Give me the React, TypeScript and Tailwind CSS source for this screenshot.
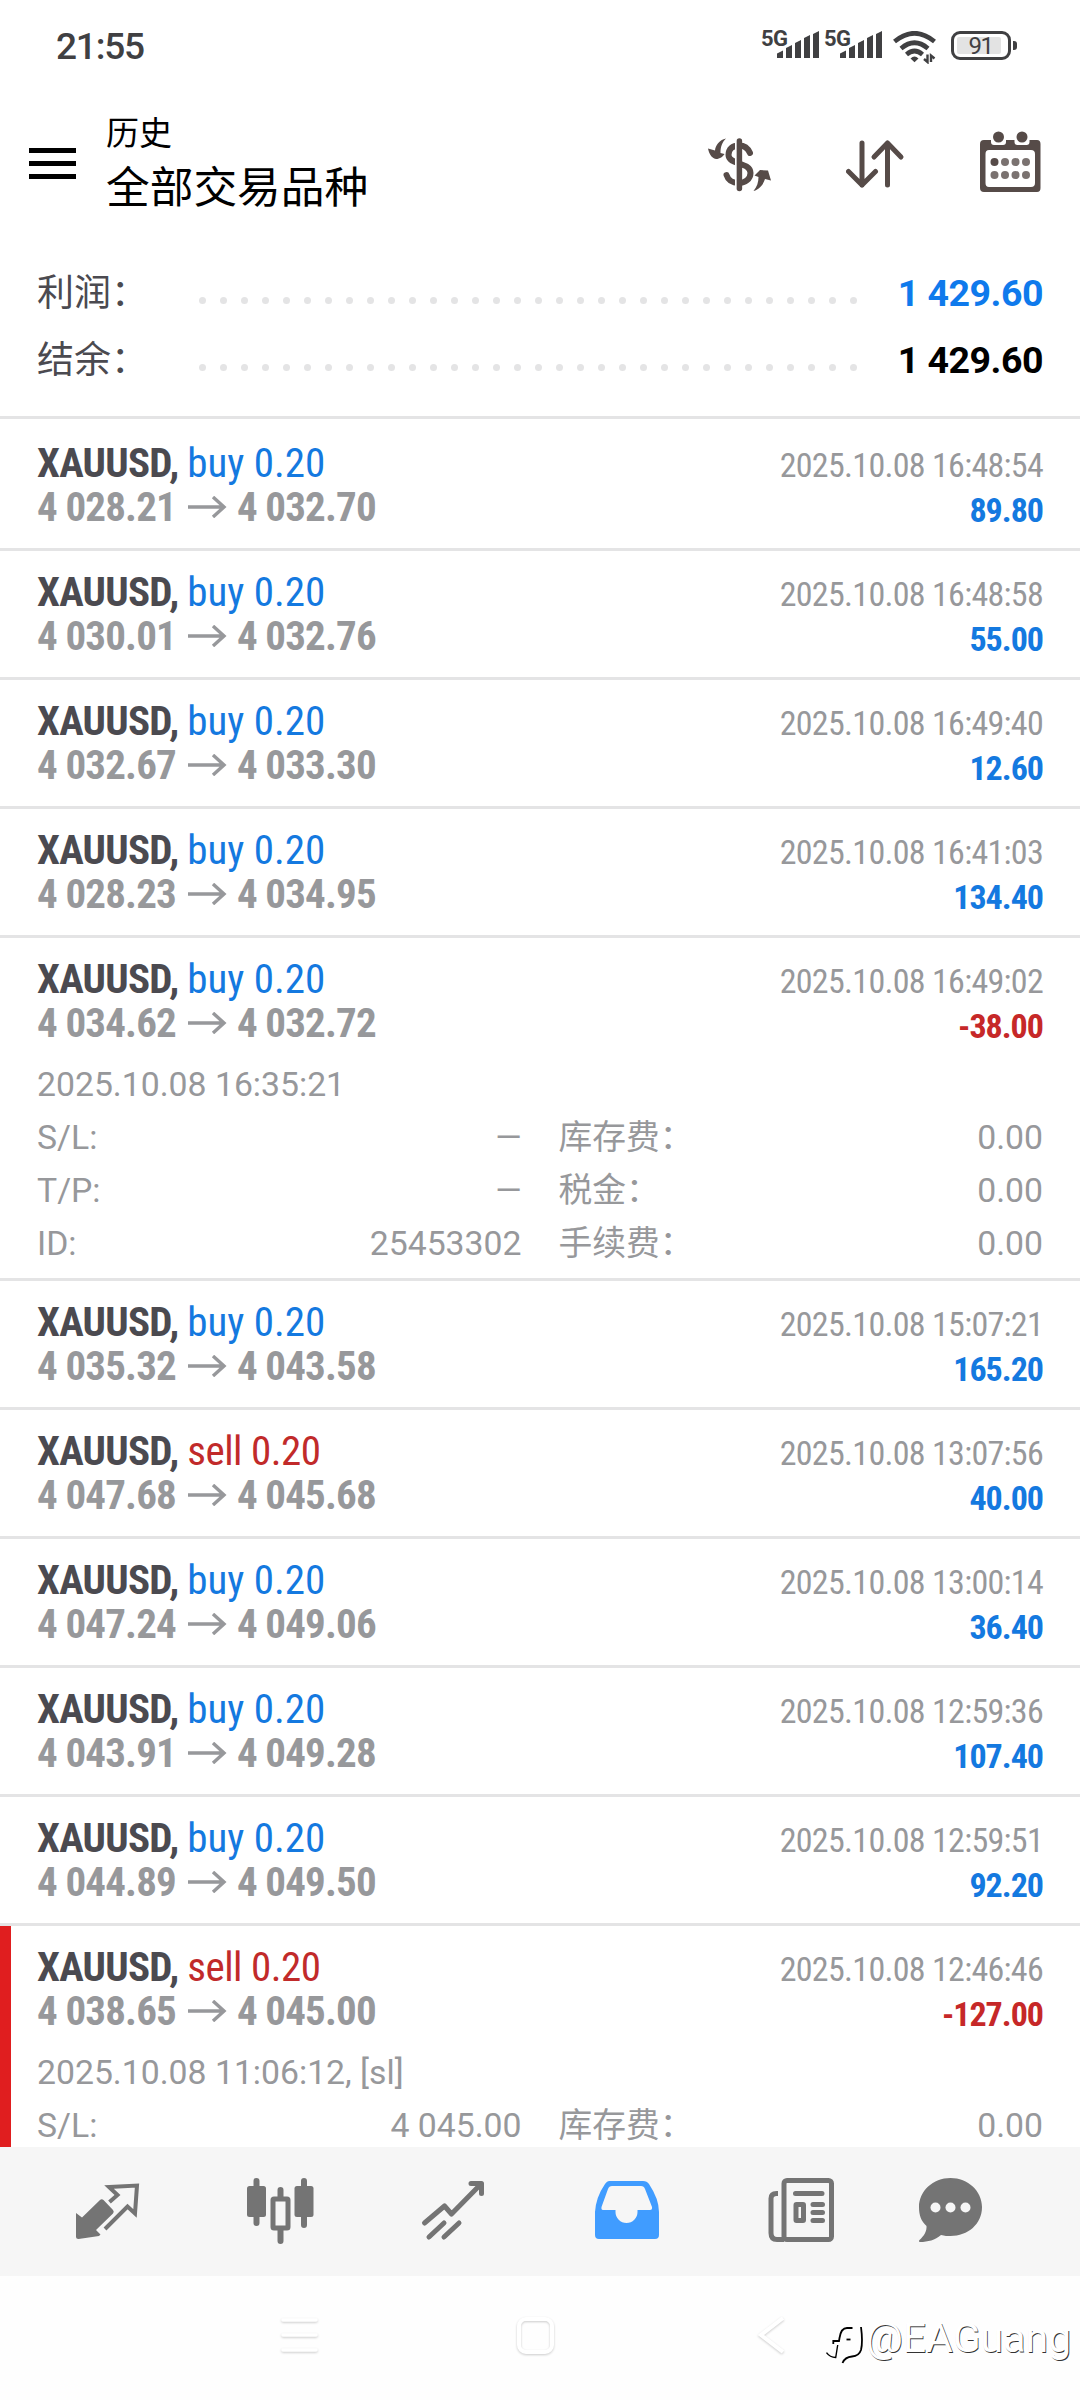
import React from 'react';

interface Details {
  opened: string;
  rows: [string, string, string, string][];
}

interface Deal {
  side: 'buy' | 'sell';
  from: string;
  to: string;
  closed: string;
  profit: string;
  details?: Details;
  marked?: boolean;
}

const deals: Deal[] = [
  { side: 'buy', from: '4 028.21', to: '4 032.70', closed: '2025.10.08 16:48:54', profit: '89.80' },
  { side: 'buy', from: '4 030.01', to: '4 032.76', closed: '2025.10.08 16:48:58', profit: '55.00' },
  { side: 'buy', from: '4 032.67', to: '4 033.30', closed: '2025.10.08 16:49:40', profit: '12.60' },
  { side: 'buy', from: '4 028.23', to: '4 034.95', closed: '2025.10.08 16:41:03', profit: '134.40' },
  {
    side: 'buy', from: '4 034.62', to: '4 032.72', closed: '2025.10.08 16:49:02', profit: '-38.00',
    details: {
      opened: '2025.10.08 16:35:21',
      rows: [
        ['S/L:', '—', '库存费：', '0.00'],
        ['T/P:', '—', '税金：', '0.00'],
        ['ID:', '25453302', '手续费：', '0.00']
      ]
    }
  },
  { side: 'buy', from: '4 035.32', to: '4 043.58', closed: '2025.10.08 15:07:21', profit: '165.20' },
  { side: 'sell', from: '4 047.68', to: '4 045.68', closed: '2025.10.08 13:07:56', profit: '40.00' },
  { side: 'buy', from: '4 047.24', to: '4 049.06', closed: '2025.10.08 13:00:14', profit: '36.40' },
  { side: 'buy', from: '4 043.91', to: '4 049.28', closed: '2025.10.08 12:59:36', profit: '107.40' },
  { side: 'buy', from: '4 044.89', to: '4 049.50', closed: '2025.10.08 12:59:51', profit: '92.20' },
  {
    side: 'sell', from: '4 038.65', to: '4 045.00', closed: '2025.10.08 12:46:46', profit: '-127.00', marked: true,
    details: {
      opened: '2025.10.08 11:06:12, [sl]',
      rows: [['S/L:', '4 045.00', '库存费：', '0.00']]
    }
  }
];

const Signal = () => (
  <div className="flex w-[63px]">
    <span className="-mt-[3px] -ml-[1px] w-[16px] text-[22px] leading-[22px] font-bold tracking-[-0.5px] whitespace-nowrap">5G</span>
    <svg width="43" height="28" viewBox="0 0 43 28" fill="currentColor">
      <path d="M0 27V22.500L6 19.500V27ZM9 27V17L15 14V27ZM18 27V12L24 9V27ZM27 27V7L33 4V27ZM36 27V3L42 0V27Z" />
    </svg>
  </div>
);

const StatusBar = () => (
  <div className="flex h-[92px] items-start justify-between pt-[28px] pr-[63px] pl-[56px] text-[#404042]">
    <span className="text-[37px] leading-[37px] font-medium tracking-[-1.200px]">21:55</span>
    <div className="flex items-start pt-[3px]">
      <Signal />
      <Signal />
      <svg className="ml-[5px]" width="44" height="33" viewBox="0 0 44 33" fill="none" stroke="currentColor" strokeWidth="4.600">
        <path d="M1.500 10.500Q21.500-6 41.500 10.500" />
        <path d="M8 17.500Q21.500 6 35 17.500" />
        <path d="M13.500 23.500Q21.500 16.500 29.500 23.500" />
        <path d="M17.500 27.500Q21.500 23.500 25.500 27.500L21.500 31.200Z" fill="currentColor" stroke="none" />
        <path d="M34.500 23.500V31L31 28M38 31V24.500L41.500 27.500" strokeWidth="2.400" />
      </svg>
      <div className="ml-[14px] flex items-center">
        <div className="flex h-[29px] w-[60px] rounded-[9px] border-[3px] border-[#404042] p-[3px]">
          <div className="flex h-full w-[44px] items-center justify-center rounded-[2px] bg-[#e3e3e3] pl-[3px] text-[24px] leading-none tracking-[-1.500px]">91</div>
        </div>
        <div className="ml-[2px] h-[9px] w-[4px] rounded-r-[3px] bg-[#404042]" />
      </div>
    </div>
  </div>
);

const Header = () => (
  <header className="flex h-[146px] items-start pr-[39px] pl-[29px]">
    <div className="mt-[56px] flex w-[47px] flex-col gap-[8px]">
      <div className="h-[5px] bg-black" />
      <div className="h-[5px] bg-black" />
      <div className="h-[5px] bg-black" />
    </div>
    <div className="mt-[19px] ml-[30px] flex-1 text-black">
      <div className="text-[33px] leading-[46px]">历史</div>
      <div className="mt-[2px] text-[43.700px] leading-[58px]">全部交易品种</div>
    </div>
    <div className="mt-[38px] flex items-center text-[#564b48]">
      <svg width="66" height="62" viewBox="0 0 66 62" fill="currentColor">
        <path d="M43 22C40.500 16 37 14.500 32 14.500C25.500 14.500 21.500 18 21.500 24C21.500 34 43.500 31 43.500 42C43.500 48 38 52 32 52C25 52 21 49 19.500 44" fill="none" stroke="currentColor" strokeWidth="6" strokeLinecap="round" />
        <path d="M28 8H31V60H28Z" fill="#fff" />
        <path d="M32.400 10V57.500" stroke="currentColor" strokeWidth="5.500" strokeLinecap="round" />
        <path d="M19 7.500C12 9 8.500 14.500 8 19.500L1 17.500C2 22 4 27 9 28C13 28 16 25.500 17.500 23L13.500 22C13.500 16 15 11.500 19 7.500Z" />
        <path d="M46.500 60C53 58 56.500 53 58 48L64 49.500L61 39.500L53 39L47.500 44.500L51.500 46C51.500 51 50 56 46.500 60Z" />
      </svg>
      <svg className="ml-[73px]" width="60" height="62" viewBox="0 0 60 62" fill="none" stroke="currentColor" strokeWidth="5" strokeLinecap="round" strokeLinejoin="round">
        <path d="M15 12V54M1.500 40.500L15 54L28.500 40.500" transform="translate(1 0)" />
        <path d="M41.500 54V12M28 26L41.500 12L55 26" />
      </svg>
      <svg className="ml-[74px]" width="61" height="64" viewBox="0 0 61 64" fill="currentColor">
        <path fillRule="evenodd" d="M4 10H57Q60.500 10 60.500 14V58Q60.500 62 57 62H4Q0 62 0 58V14Q0 10 4 10ZM9 20Q5.500 20 5.500 24V53Q5.500 57 9 57H51Q55 57 55 53V24Q55 20 51 20Z" />
        <path d="M11 8H26V12Q26 15 23 15H14Q11 15 11 12ZM34.500 8H49.500V12Q49.500 15 46.500 15H37.500Q34.500 15 34.500 12Z" fill="#fff" />
        <circle cx="18.500" cy="7" r="5.500" />
        <circle cx="42" cy="7" r="5.500" />
        <circle cx="14.500" cy="32" r="4" />
        <g opacity="0.78">
          <circle cx="25" cy="32" r="4" />
          <circle cx="35.500" cy="32" r="4" />
          <circle cx="46" cy="32" r="4" />
          <circle cx="14.500" cy="45" r="4" />
          <circle cx="25" cy="45" r="4" />
          <circle cx="35.500" cy="45" r="4" />
          <circle cx="46" cy="45" r="4" />
        </g>
      </svg>
    </div>
  </header>
);

const SummaryRow = ({ label, value, className }: { label: string; value: string; className: string }) => (
  <div className="flex h-[67px] items-center">
    <span className="w-[162px] pt-[3px] text-[37px] text-[#4b4a50]">{label}</span>
    <div className="mt-[15px] flex w-[658px] justify-between">
      {Array.from({ length: 32 }, (_, i) => (
        <i key={i} className="h-[7px] w-[7px] rounded-full bg-[#e4e4e5]" />
      ))}
    </div>
    <span className={`flex-1 pt-[1px] text-right text-[37.500px] font-bold tracking-[-0.500px] whitespace-nowrap ${className}`}>{value}</span>
  </div>
);

const DetailCell = ({ label, value }: { label: string; value: string }) => (
  <div className="flex justify-between">
    <span>{label}</span>
    <span>{value}</span>
  </div>
);

const DealRow = ({ deal, first }: { deal: Deal; first: boolean }) => (
  <div className={`relative border-b-[3px] border-[#e4e4e5] px-[37px] ${first ? 'pt-[3px]' : ''}`}>
    {deal.marked && <div className="absolute inset-y-0 left-0 w-[11px] bg-[#e01e1f]" />}
    <div className="flex h-[126px] justify-between pt-[19px] font-['Roboto_Condensed','Roboto'] [font-stretch:75%]">
      <div className="text-[41px] leading-[45px]">
        <div>
          <span className="font-bold tracking-[-0.750px] text-[#4b4a50]">XAUUSD, </span>
          <span className={deal.side === 'buy' ? 'text-[#1479e0]' : 'tracking-[-0.500px] text-[#c12a2a]'}>{deal.side} 0.20</span>
        </div>
        <div className="-mt-[1px] flex items-center font-bold tracking-[-0.850px] text-[#97989b]">
          <span>{deal.from}</span>
          <svg className="mr-[10px] mb-[2px] ml-[12px]" width="39" height="22" viewBox="0 0 39 22" fill="none" stroke="currentColor" strokeWidth="3.400">
            <path d="M0 11H36M25 1L36 11L25 21" />
          </svg>
          <span>{deal.to}</span>
        </div>
      </div>
      <div className="pt-[2px] text-right text-[34px] leading-[45px] tracking-[-0.700px]">
        <div className="text-[#97989b]">{deal.closed}</div>
        <div className={`font-bold tracking-[-1px] ${deal.profit.startsWith('-') ? 'text-[#c62828]' : 'text-[#1479e0]'}`}>{deal.profit}</div>
      </div>
    </div>
    {deal.details && (
      <div className="-mt-[6px] h-[220px] text-[33.750px] leading-[53px] text-[#97989b]">
        <div>{deal.details.opened}</div>
        {deal.details.rows.map(([label, value, feeLabel, fee]) => (
          <div key={label} className="grid h-[53px] grid-cols-2 gap-x-[37px]">
            <DetailCell label={label} value={value} />
            <DetailCell label={feeLabel} value={fee} />
          </div>
        ))}
      </div>
    )}
  </div>
);

const TabBar = () => (
  <nav className="flex h-[129px] items-start bg-[#f6f6f6] pt-[29px] text-[#747474]">
    <svg className="ml-[74px]" width="68" height="68" viewBox="0 0 68 68" fill="currentColor">
      <path d="M2 37L8 41.500L26 24Q27.700 22.500 29.500 24L39 34Q40.500 35.700 39 37.500L22 54L26.500 58.500L25 60L4.500 63Q2 63 2 60.500Z" />
      <path d="M35.500 26L43.500 19L35 11L63 9.500L61 37.500L53.500 30.500L31 53" fill="none" stroke="currentColor" strokeWidth="4" />
    </svg>
    <svg className="ml-[103px]" width="70" height="68" viewBox="0 0 70 68" fill="currentColor">
      <path d="M11.500 5V47M59 5V49M35.500 14V24M35.500 54V65" stroke="currentColor" strokeWidth="6" strokeLinecap="round" />
      <rect x="2" y="10" width="19" height="31" rx="2.500" />
      <rect x="49.500" y="10" width="19" height="31" rx="2.500" />
      <rect x="28" y="23" width="15" height="29" rx="1" fill="#f6f6f6" stroke="currentColor" strokeWidth="5" />
    </svg>
    <svg className="ml-[105px]" width="68" height="68" viewBox="0 0 68 68" fill="none" stroke="currentColor" strokeWidth="5" strokeLinecap="round" strokeLinejoin="round">
      <path d="M4.500 47L24.500 30L31.500 38L60 9" />
      <path d="M51 7.500H61.500V17.500" />
      <path d="M9 61L24 47M24 61L39 47" />
    </svg>
    <svg className="ml-[105px] text-[#409cff]" width="68" height="68" viewBox="0 0 68 68" fill="currentColor">
      <path fillRule="evenodd" d="M16 5H50Q54 5 56 8Q66 23 66 36V59Q66 63 62 63H6Q2 63 2 59V36Q3 21 12 8Q14 5 16 5ZM19 10Q16 10 15 13L8.500 31Q8 34 10 34H22.500V36A11 11 0 0 0 44.500 36V34H57Q59.500 34 59 31L52 13Q51 10 48 10Z" />
    </svg>
    <svg className="ml-[107px]" width="68" height="68" viewBox="0 0 68 68" fill="none" stroke="currentColor" strokeWidth="5" strokeLinecap="round">
      <rect x="16" y="4.500" width="47.500" height="59" rx="3" />
      <path d="M10 17.500H8.500Q3 17.500 3 22.500V57Q3 63.500 9 63.500H16" strokeLinecap="butt" />
      <path d="M27.500 17.500H54M45 28.500H54.500M45 36.500H54.500M45 44.500H54.500" />
      <rect x="28" y="28.500" width="7.500" height="16" rx="0.500" />
    </svg>
    <svg className="ml-[82px]" width="68" height="68" viewBox="0 0 68 68">
      <path d="M32.500 2C50 2 64 15 64 31C64 48 50 60 32.500 60C29 60 27 60 23 59C17 64 10 66 2 66C1 66 0.500 65 1.500 64C6 60 9 55 8.500 50C3 45 1 39 1 31C1 15 15 2 32.500 2Z" fill="currentColor" />
      <circle cx="17.500" cy="31.500" r="5" fill="#f6f6f6" />
      <circle cx="32.500" cy="31.500" r="5" fill="#f6f6f6" />
      <circle cx="47.500" cy="31.500" r="5" fill="#f6f6f6" />
    </svg>
  </nav>
);

const SystemNav = () => (
  <div className="relative h-[124px] bg-[#fefefe]">
    <div className="flex items-start pt-[39px] pl-[279px]">
      <svg className="drop-shadow-[0_1px_1px_rgba(0,0,0,0.2)]" width="42" height="42" viewBox="0 0 42 42" stroke="#fff" strokeWidth="3.500" fill="none" strokeLinecap="round">
        <path d="M4 5H37M4 20H37M4 35H37" />
      </svg>
      <svg className="ml-[194px] drop-shadow-[0_1px_1px_rgba(0,0,0,0.2)]" width="42" height="42" viewBox="0 0 42 42" stroke="#fff" strokeWidth="4" fill="none">
        <rect x="4" y="4" width="33" height="33" rx="7" />
      </svg>
      <svg className="ml-[200px] drop-shadow-[0_1px_1px_rgba(0,0,0,0.2)]" width="42" height="42" viewBox="0 0 42 42" stroke="#fff" strokeWidth="4" fill="none">
        <path d="M26 3L4 20L26 37" />
      </svg>
    </div>
    {/* author stamp over the nav bar */}
    <div className="absolute top-[35px] left-[825px] flex items-start text-[41px] leading-[54px] text-white [text-shadow:0.8px_0.8px_0_#333]">
      <svg className="mt-[7px] mr-[1px]" width="40" height="47" viewBox="0 0 40 47" fill="none" stroke="#000" strokeWidth="1.800">
        <path d="M8.300 26V23H14L14.500 20Q16 10 22 10H27.500" />
        <path d="M36 9Q38 24 36 32Q34 38 27 38.500Q20 39 17.500 45" />
        <path d="M1.500 34.700Q5 39.500 10.700 39.500L12.700 27" strokeWidth="1.400" />
        <path d="M21.500 21.500H25.500" />
      </svg>
      <span className="whitespace-nowrap">@EAGuang</span>
    </div>
  </div>
);

const App: React.FC = () => (
  <div className="flex h-[2400px] w-[1080px] flex-col overflow-hidden bg-white font-['Roboto','Noto_Sans_CJK_SC',sans-serif]">
    <StatusBar />
    <Header />
    <section className="h-[181px] border-b-[3px] border-[#e4e4e5] px-[37px] pt-[21px]">
      <SummaryRow label="利润：" value="1 429.60" className="text-[#0f7aec]" />
      <SummaryRow label="结余：" value="1 429.60" className="text-black" />
    </section>
    <main className="h-[1728px] overflow-hidden">
      {deals.map((deal, i) => (
        <DealRow key={deal.closed} deal={deal} first={i === 0} />
      ))}
    </main>
    <TabBar />
    <SystemNav />
  </div>
);

export default App;
